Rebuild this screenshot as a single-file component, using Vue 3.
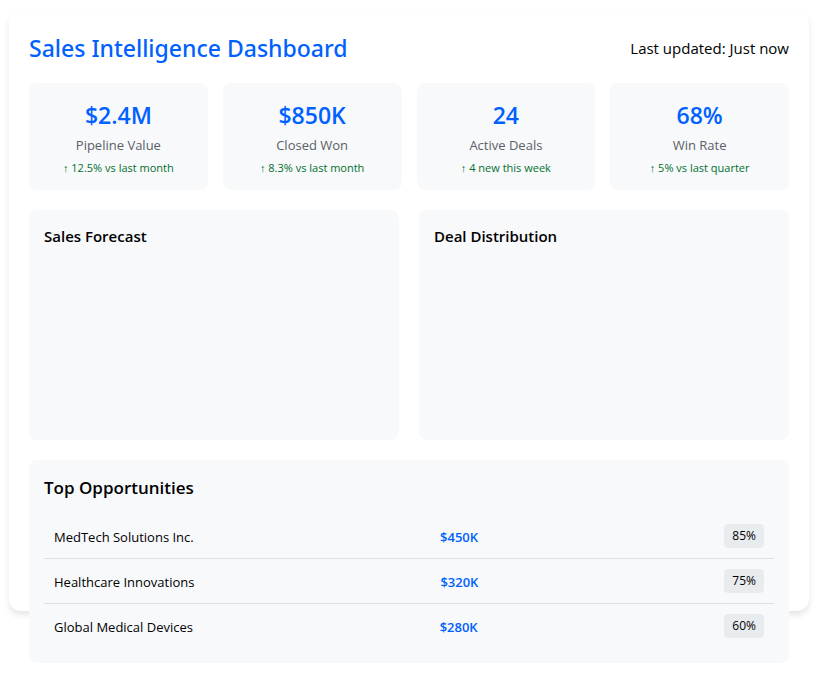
<script setup>
const metrics = [
  { value: '$2.4M', label: 'Pipeline Value', change: '↑ 12.5% vs last month' },
  { value: '$850K', label: 'Closed Won', change: '↑ 8.3% vs last month' },
  { value: '24', label: 'Active Deals', change: '↑ 4 new this week' },
  { value: '68%', label: 'Win Rate', change: '↑ 5% vs last quarter' },
]

const charts = ['Sales Forecast', 'Deal Distribution']

const opportunities = [
  { name: 'MedTech Solutions Inc.', value: '$450K', probability: '85%' },
  { name: 'Healthcare Innovations', value: '$320K', probability: '75%' },
  { name: 'Global Medical Devices', value: '$280K', probability: '60%' },
]
</script>

<template>
  <main class="dashboard">
    <header class="header">
      <h1 class="title">Sales Intelligence Dashboard</h1>
      <div class="updated">Last updated: Just now</div>
    </header>

    <section class="metrics">
      <article v-for="metric in metrics" :key="metric.label" class="metric">
        <div class="metric-value">{{ metric.value }}</div>
        <div class="metric-label">{{ metric.label }}</div>
        <div class="metric-change">{{ metric.change }}</div>
      </article>
    </section>

    <section class="charts">
      <article v-for="chart in charts" :key="chart" class="chart">
        <h2 class="chart-title">{{ chart }}</h2>
      </article>
    </section>

    <section class="opportunities">
      <h2 class="list-title">Top Opportunities</h2>
      <ul class="list">
        <li v-for="item in opportunities" :key="item.name" class="row">
          <span>{{ item.name }}</span>
          <span class="amount">{{ item.value }}</span>
          <span class="badge">{{ item.probability }}</span>
        </li>
      </ul>
    </section>
  </main>
</template>

<style>
body {
  background: #fff;
}
</style>

<style scoped>
.dashboard {
  margin: 11px 15px 71px 9px;
  padding: 20px 20px 0;
  border-radius: 12px;
  background: #fff;
  box-shadow: 0 4px 6px rgba(0, 0, 0, 0.1);
  font-family: 'Open Sans', 'Noto Sans', sans-serif;
  color: #000;
  display: flow-root;
}

.header {
  display: flex;
  justify-content: space-between;
  align-items: center;
  margin-bottom: 18px;
}

.title {
  margin: 0;
  font-family: 'Noto Sans', 'Open Sans', sans-serif;
  font-size: 23px;
  line-height: 34px;
  font-weight: 500;
  color: #0061ff;
}

.updated {
  font-size: 15px;
  line-height: 20px;
}

.metrics {
  display: grid;
  grid-template-columns: repeat(4, 1fr);
  gap: 15px;
  margin-bottom: 20px;
}

.metric {
  padding: 15px;
  border-radius: 8px;
  background: #f8f9fb;
  text-align: center;
}

.metric-value {
  font-size: 23px;
  line-height: 34px;
  font-weight: 600;
  color: #0061ff;
}

.metric-label {
  margin-top: 3px;
  font-size: 13px;
  line-height: 20px;
  color: #5a6068;
}

.metric-change {
  margin-top: 5px;
  font-size: 11px;
  line-height: 15px;
  color: #00702c;
}

.charts {
  display: grid;
  grid-template-columns: repeat(2, 1fr);
  gap: 20px;
}

.chart {
  box-sizing: border-box;
  min-height: 230px;
  padding: 15px;
  border-radius: 8px;
  background: #f8f9fb;
}

.chart-title {
  margin: 0;
  font-size: 15px;
  line-height: 22px;
  font-weight: 600;
}

/* The list hangs over the lower edge of the dashboard card. */
.opportunities {
  margin: 20px 0 -52px;
  padding: 15px;
  border-radius: 8px;
  background: #f8f9fb;
}

.list-title {
  margin: 0 0 14px;
  font-size: 17px;
  line-height: 25px;
  font-weight: 600;
}

.list {
  margin: 0;
  padding: 0;
  list-style: none;
}

.row {
  display: flex;
  justify-content: space-between;
  align-items: flex-end;
  padding: 10px;
  border-bottom: 1px solid #dee0e3;
  font-size: 13px;
  line-height: 22px;
}

.row:last-child {
  border-bottom: 0;
}

.amount {
  font-weight: 600;
  color: #0061ff;
}

.badge {
  padding: 4px 8px;
  border-radius: 4px;
  background: #e9ecef;
  font-size: 12px;
  line-height: 16px;
}
</style>
